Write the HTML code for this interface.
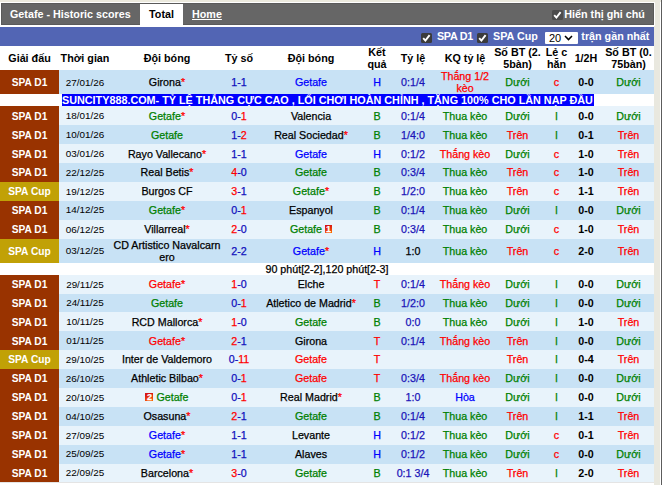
<!DOCTYPE html>
<html lang="vi"><head><meta charset="utf-8"><title>Getafe - Historic scores</title>
<style>
html,body{margin:0;padding:0}
body{width:662px;height:485px;overflow:hidden;background:#fff;position:relative;font-family:"Liberation Sans",sans-serif;font-size:10.7px;color:#000}
.abs{position:absolute}
#page{position:absolute;left:0;top:0;width:662px;height:485px;overflow:hidden;background:#fff}
.r{position:absolute;left:0;width:654px}
.c{position:absolute;height:12px;line-height:12px;text-align:center;white-space:nowrap;font-size:10.7px;-webkit-text-stroke:0.25px}
.c span,.c b{line-height:1px}
.lg,.th,.hh,.dt{-webkit-text-stroke:0}
.lg{color:#fff;font-weight:bold}
.lg span{font-size:10.2px}
.st{color:#ff0000;font-weight:normal}
.sc{color:#1010bc}
.tl{color:#1a14b8}
.hh{font-weight:bold}
.th{font-weight:bold}
.th span{font-size:10.75px}
.dt span{font-size:9.9px}
.card{display:inline-block;overflow:hidden;font-style:normal;background:linear-gradient(160deg,#d61414 20%,#ff6a00 100%);color:#fff;font-size:9px;line-height:8.5px;width:8px;height:8px;font-weight:bold;margin:0 3px 0 0;text-align:center}
.card.cr{margin:0 0 0 3px;width:7px}
.cb{width:10.5px;height:10px;background:#3b3b3b;border-radius:1.5px}
</style></head><body><div id="page">
<div class="abs" style="left:0;top:0;width:662px;height:2px;background:#ebe9dd"></div>
<div class="abs" style="left:654px;top:0;width:6px;height:485px;background:#e9e8df"></div>
<div class="abs" style="left:654px;top:2px;width:1px;height:24px;background:#fff"></div>
<div class="abs" style="left:661px;top:0;width:1px;height:485px;background:#5c5c5c"></div>
<div class="abs" style="left:1px;top:3px;width:653px;height:22px;background:#666;box-sizing:border-box;border:1px solid #5a5a5a"></div>
<div class="abs" style="left:10px;top:3px;height:22px;line-height:22px;color:#fff;font-weight:bold;font-size:10.75px;white-space:nowrap">Getafe - Historic scores</div>
<div class="abs" style="left:140px;top:4px;width:43px;height:21px;background:#fff;line-height:20px;text-align:center;font-weight:bold;font-size:10.75px">Total</div>
<div class="abs" style="left:192px;top:3px;height:22px;line-height:22px;color:#fff;font-weight:bold;font-size:10.75px;text-decoration:underline">Home</div>
<div class="abs cb" style="left:552px;top:9.5px;background:#4c4c4c"><svg width="10.5" height="10" viewBox="0 0 10.5 10" style="display:block"><path d="M2.2 5.2 L4.4 7.6 L8.6 2.2" fill="none" stroke="#fff" stroke-width="1.9"/></svg></div>
<div class="abs" style="left:564.3px;top:3px;height:22px;line-height:22px;color:#fff;font-weight:bold;font-size:10.75px;white-space:nowrap">Hiển thị ghi chú</div>
<div class="abs" style="left:0;top:27px;width:654px;height:19px;background:#5265b4"></div>
<div class="abs cb" style="left:421.3px;top:32.7px"><svg width="10.5" height="10" viewBox="0 0 10.5 10" style="display:block"><path d="M2.2 5.2 L4.4 7.6 L8.6 2.2" fill="none" stroke="#fff" stroke-width="1.9"/></svg></div>
<div class="abs" style="left:437px;top:27px;height:19px;line-height:19px;color:#fff;font-weight:bold;font-size:10.75px;letter-spacing:-0.3px;white-space:nowrap">SPA D1</div>
<div class="abs cb" style="left:477px;top:32.7px"><svg width="10.5" height="10" viewBox="0 0 10.5 10" style="display:block"><path d="M2.2 5.2 L4.4 7.6 L8.6 2.2" fill="none" stroke="#fff" stroke-width="1.9"/></svg></div>
<div class="abs" style="left:493px;top:27px;height:19px;line-height:19px;color:#fff;font-weight:bold;font-size:10.75px;white-space:nowrap">SPA Cup</div>
<div class="abs" style="left:545px;top:31.6px;width:33px;height:12.4px;background:#fff;border-radius:1px;box-sizing:border-box;font-size:11px;line-height:12.4px;padding-left:4px">20<svg class="abs" style="left:18.5px;top:3.5px" width="9" height="6" viewBox="0 0 9 6"><path d="M1 1 L4.5 4.6 L8 1" fill="none" stroke="#000" stroke-width="1.5"/></svg></div>
<div class="abs" style="left:581.3px;top:27px;height:19px;line-height:19px;color:#fff;font-weight:bold;font-size:10.75px;white-space:nowrap">trận gần nhất</div>
<div class="r" style="top:46px;height:24px;background:#fff"><div class="c th" style="left:0px;width:59px;top:6px;"><span>Giải đấu</span></div><div class="c th" style="left:59px;width:52px;top:6px;"><span>Thời gian</span></div><div class="c th" style="left:111px;width:112px;top:6px;"><span>Đội bóng</span></div><div class="c th" style="left:223px;width:32px;top:6px;"><span>Tỷ số</span></div><div class="c th" style="left:255px;width:112px;top:6px;"><span>Đội bóng</span></div><div class="c th" style="left:367px;width:20px;top:0px;"><span>Kết</span></div><div class="c th" style="left:367px;width:20px;top:12px;"><span>quả</span></div><div class="c th" style="left:387px;width:52px;top:6px;"><span>Tỷ lệ</span></div><div class="c th" style="left:439px;width:52px;top:6px;"><span>KQ tỷ lệ</span></div><div class="c th" style="left:491px;width:53px;top:0px;"><span>Số BT (2.</span></div><div class="c th" style="left:491px;width:53px;top:12px;"><span>5bàn)</span></div><div class="c th" style="left:544px;width:25px;top:0px;"><span>Lẻ c</span></div><div class="c th" style="left:544px;width:25px;top:12px;"><span>hẵn</span></div><div class="c th" style="left:569px;width:34px;top:6px;"><span>1/2H</span></div><div class="c th" style="left:603px;width:51px;top:0px;"><span>Số BT (0.</span></div><div class="c th" style="left:603px;width:51px;top:12px;"><span>75bàn)</span></div></div>
<div class="r" style="top:70px;height:24px;background:#c8e2f5"><div class="abs" style="left:0px;top:0;width:59px;height:24px;background:#993300"></div><div class="c lg" style="left:0px;width:59px;top:6px;"><span>SPA D1</span></div><div class="c dt" style="left:59px;width:52px;top:6px;"><span>27/01/26</span></div><div class="c " style="left:111px;width:112px;top:6px;"><span style="color:#000000">Girona</span><b class="st">*</b></div><div class="c sc" style="left:223px;width:32px;top:6px;">1-1</div><div class="c " style="left:255px;width:112px;top:6px;"><span style="color:#0000ff">Getafe</span></div><div class="c " style="left:367px;width:20px;top:6px;color:#0000ff">H</div><div class="c tl" style="left:387px;width:52px;top:6px;">0:1/4</div><div class="c " style="left:439px;width:52px;top:0px;color:#ff0000">Thắng 1/2</div><div class="c " style="left:439px;width:52px;top:12px;color:#ff0000">kèo</div><div class="c " style="left:491px;width:53px;top:6px;color:#008000">Dưới</div><div class="c " style="left:544px;width:25px;top:6px;color:#ff0000">c</div><div class="c hh" style="left:569px;width:34px;top:6px;">0-0</div><div class="c " style="left:603px;width:51px;top:6px;color:#008000">Dưới</div></div>
<div class="r" style="top:94px;height:12px;background:#fff"><div class="abs" style="left:62px;top:0px;height:12px;line-height:12px;background:#0000ff;color:#fff;font-weight:bold;font-size:10.8px;white-space:nowrap;padding:0 1px 0 0">SUNCITY888.COM- TỶ LỆ THẮNG CỰC CAO , LỐI CHƠI HOÀN CHỈNH , TẶNG 100% CHO LẦN NẠP ĐẦU</div></div>
<div class="r" style="top:106px;height:19px;background:#e8f3fb"><div class="abs" style="left:0px;top:0;width:59px;height:19px;background:#993300"></div><div class="c lg" style="left:0px;width:59px;top:4px;"><span>SPA D1</span></div><div class="c dt" style="left:59px;width:52px;top:3px;"><span>18/01/26</span></div><div class="c " style="left:111px;width:112px;top:4px;"><span style="color:#008000">Getafe</span><b class="st">*</b></div><div class="c sc" style="left:223px;width:32px;top:4px;">0-<span style="color:#ff0000">1</span></div><div class="c " style="left:255px;width:112px;top:4px;"><span style="color:#000000">Valencia</span></div><div class="c " style="left:367px;width:20px;top:4px;color:#008000">B</div><div class="c tl" style="left:387px;width:52px;top:4px;">0:1/4</div><div class="c " style="left:439px;width:52px;top:4px;color:#008000">Thua kèo</div><div class="c " style="left:491px;width:53px;top:4px;color:#008000">Dưới</div><div class="c " style="left:544px;width:25px;top:4px;color:#008000">l</div><div class="c hh" style="left:569px;width:34px;top:4px;">0-0</div><div class="c " style="left:603px;width:51px;top:4px;color:#008000">Dưới</div></div>
<div class="r" style="top:125px;height:19px;background:#c8e2f5"><div class="abs" style="left:0px;top:0;width:59px;height:19px;background:#993300"></div><div class="c lg" style="left:0px;width:59px;top:4px;"><span>SPA D1</span></div><div class="c dt" style="left:59px;width:52px;top:3px;"><span>10/01/26</span></div><div class="c " style="left:111px;width:112px;top:4px;"><span style="color:#008000">Getafe</span></div><div class="c sc" style="left:223px;width:32px;top:4px;">1-<span style="color:#ff0000">2</span></div><div class="c " style="left:255px;width:112px;top:4px;"><span style="color:#000000">Real Sociedad</span><b class="st">*</b></div><div class="c " style="left:367px;width:20px;top:4px;color:#008000">B</div><div class="c tl" style="left:387px;width:52px;top:4px;">1/4:0</div><div class="c " style="left:439px;width:52px;top:4px;color:#008000">Thua kèo</div><div class="c " style="left:491px;width:53px;top:4px;color:#ff0000">Trên</div><div class="c " style="left:544px;width:25px;top:4px;color:#008000">l</div><div class="c hh" style="left:569px;width:34px;top:4px;">0-1</div><div class="c " style="left:603px;width:51px;top:4px;color:#ff0000">Trên</div></div>
<div class="r" style="top:144px;height:19px;background:#e8f3fb"><div class="abs" style="left:0px;top:0;width:59px;height:19px;background:#993300"></div><div class="c lg" style="left:0px;width:59px;top:4px;"><span>SPA D1</span></div><div class="c dt" style="left:59px;width:52px;top:3px;"><span>03/01/26</span></div><div class="c " style="left:111px;width:112px;top:4px;"><span style="color:#000000">Rayo Vallecano</span><b class="st">*</b></div><div class="c sc" style="left:223px;width:32px;top:4px;">1-1</div><div class="c " style="left:255px;width:112px;top:4px;"><span style="color:#0000ff">Getafe</span></div><div class="c " style="left:367px;width:20px;top:4px;color:#0000ff">H</div><div class="c tl" style="left:387px;width:52px;top:4px;">0:1/2</div><div class="c " style="left:439px;width:52px;top:4px;color:#ff0000">Thắng kèo</div><div class="c " style="left:491px;width:53px;top:4px;color:#008000">Dưới</div><div class="c " style="left:544px;width:25px;top:4px;color:#ff0000">c</div><div class="c hh" style="left:569px;width:34px;top:4px;">1-0</div><div class="c " style="left:603px;width:51px;top:4px;color:#ff0000">Trên</div></div>
<div class="r" style="top:163px;height:19px;background:#c8e2f5"><div class="abs" style="left:0px;top:0;width:59px;height:19px;background:#993300"></div><div class="c lg" style="left:0px;width:59px;top:3px;"><span>SPA D1</span></div><div class="c dt" style="left:59px;width:52px;top:3px;"><span>22/12/25</span></div><div class="c " style="left:111px;width:112px;top:3px;"><span style="color:#000000">Real Betis</span><b class="st">*</b></div><div class="c sc" style="left:223px;width:32px;top:3px;"><span style="color:#ff0000">4</span>-0</div><div class="c " style="left:255px;width:112px;top:3px;"><span style="color:#008000">Getafe</span></div><div class="c " style="left:367px;width:20px;top:3px;color:#008000">B</div><div class="c tl" style="left:387px;width:52px;top:3px;">0:3/4</div><div class="c " style="left:439px;width:52px;top:3px;color:#008000">Thua kèo</div><div class="c " style="left:491px;width:53px;top:3px;color:#ff0000">Trên</div><div class="c " style="left:544px;width:25px;top:3px;color:#ff0000">c</div><div class="c hh" style="left:569px;width:34px;top:3px;">1-0</div><div class="c " style="left:603px;width:51px;top:3px;color:#ff0000">Trên</div></div>
<div class="r" style="top:182px;height:19px;background:#e8f3fb"><div class="abs" style="left:0px;top:0;width:59px;height:19px;background:#c1a106"></div><div class="c lg" style="left:0px;width:59px;top:3px;"><span>SPA Cup</span></div><div class="c dt" style="left:59px;width:52px;top:3px;"><span>19/12/25</span></div><div class="c " style="left:111px;width:112px;top:3px;"><span style="color:#000000">Burgos CF</span></div><div class="c sc" style="left:223px;width:32px;top:3px;"><span style="color:#ff0000">3</span>-1</div><div class="c " style="left:255px;width:112px;top:3px;"><span style="color:#008000">Getafe</span><b class="st">*</b></div><div class="c " style="left:367px;width:20px;top:3px;color:#008000">B</div><div class="c tl" style="left:387px;width:52px;top:3px;">1/2:0</div><div class="c " style="left:439px;width:52px;top:3px;color:#008000">Thua kèo</div><div class="c " style="left:491px;width:53px;top:3px;color:#ff0000">Trên</div><div class="c " style="left:544px;width:25px;top:3px;color:#ff0000">c</div><div class="c hh" style="left:569px;width:34px;top:3px;">1-1</div><div class="c " style="left:603px;width:51px;top:3px;color:#ff0000">Trên</div></div>
<div class="r" style="top:201px;height:19px;background:#c8e2f5"><div class="abs" style="left:0px;top:0;width:59px;height:19px;background:#993300"></div><div class="c lg" style="left:0px;width:59px;top:3px;"><span>SPA D1</span></div><div class="c dt" style="left:59px;width:52px;top:2px;"><span>14/12/25</span></div><div class="c " style="left:111px;width:112px;top:3px;"><span style="color:#008000">Getafe</span><b class="st">*</b></div><div class="c sc" style="left:223px;width:32px;top:3px;">0-<span style="color:#ff0000">1</span></div><div class="c " style="left:255px;width:112px;top:3px;"><span style="color:#000000">Espanyol</span></div><div class="c " style="left:367px;width:20px;top:3px;color:#008000">B</div><div class="c tl" style="left:387px;width:52px;top:3px;">0:1/4</div><div class="c " style="left:439px;width:52px;top:3px;color:#008000">Thua kèo</div><div class="c " style="left:491px;width:53px;top:3px;color:#008000">Dưới</div><div class="c " style="left:544px;width:25px;top:3px;color:#008000">l</div><div class="c hh" style="left:569px;width:34px;top:3px;">0-0</div><div class="c " style="left:603px;width:51px;top:3px;color:#008000">Dưới</div></div>
<div class="r" style="top:220px;height:19px;background:#e8f3fb"><div class="abs" style="left:0px;top:0;width:59px;height:19px;background:#993300"></div><div class="c lg" style="left:0px;width:59px;top:3px;"><span>SPA D1</span></div><div class="c dt" style="left:59px;width:52px;top:3px;"><span>06/12/25</span></div><div class="c " style="left:111px;width:112px;top:3px;"><span style="color:#000000">Villarreal</span><b class="st">*</b></div><div class="c sc" style="left:223px;width:32px;top:3px;"><span style="color:#ff0000">2</span>-0</div><div class="c " style="left:255px;width:112px;top:3px;"><span style="color:#008000">Getafe</span><i class="card cr">1</i></div><div class="c " style="left:367px;width:20px;top:3px;color:#008000">B</div><div class="c tl" style="left:387px;width:52px;top:3px;">0:3/4</div><div class="c " style="left:439px;width:52px;top:3px;color:#008000">Thua kèo</div><div class="c " style="left:491px;width:53px;top:3px;color:#008000">Dưới</div><div class="c " style="left:544px;width:25px;top:3px;color:#ff0000">c</div><div class="c hh" style="left:569px;width:34px;top:3px;">1-0</div><div class="c " style="left:603px;width:51px;top:3px;color:#ff0000">Trên</div></div>
<div class="r" style="top:239px;height:24px;background:#c8e2f5"><div class="abs" style="left:0px;top:0;width:59px;height:24px;background:#c1a106"></div><div class="c lg" style="left:0px;width:59px;top:6px;"><span>SPA Cup</span></div><div class="c dt" style="left:59px;width:52px;top:5px;"><span>03/12/25</span></div><div class="c " style="left:111px;width:112px;top:0px;"><span style="color:#000000">CD Artistico Navalcarn</span></div><div class="c " style="left:111px;width:112px;top:12px;"><span style="color:#000000">ero</span></div><div class="c sc" style="left:223px;width:32px;top:6px;">2-2</div><div class="c " style="left:255px;width:112px;top:6px;"><span style="color:#0000ff">Getafe</span><b class="st">*</b></div><div class="c " style="left:367px;width:20px;top:6px;color:#0000ff">H</div><div class="c tl" style="left:387px;width:52px;top:6px;color:#000">1:0</div><div class="c " style="left:439px;width:52px;top:6px;color:#008000">Thua kèo</div><div class="c " style="left:491px;width:53px;top:6px;color:#ff0000">Trên</div><div class="c " style="left:544px;width:25px;top:6px;color:#ff0000">c</div><div class="c hh" style="left:569px;width:34px;top:6px;">2-0</div><div class="c " style="left:603px;width:51px;top:6px;color:#ff0000">Trên</div></div>
<div class="r" style="top:263px;height:12px;background:#fff"><div class="c" style="left:0;width:654px;top:0px">90 phút[2-2],120 phút[2-3]</div></div>
<div class="r" style="top:275px;height:19px;background:#e8f3fb"><div class="abs" style="left:0px;top:0;width:59px;height:19px;background:#993300"></div><div class="c lg" style="left:0px;width:59px;top:3px;"><span>SPA D1</span></div><div class="c dt" style="left:59px;width:52px;top:3px;"><span>29/11/25</span></div><div class="c " style="left:111px;width:112px;top:3px;"><span style="color:#ff0000">Getafe</span><b class="st">*</b></div><div class="c sc" style="left:223px;width:32px;top:3px;"><span style="color:#ff0000">1</span>-0</div><div class="c " style="left:255px;width:112px;top:3px;"><span style="color:#000000">Elche</span></div><div class="c " style="left:367px;width:20px;top:3px;color:#ff0000">T</div><div class="c tl" style="left:387px;width:52px;top:3px;">0:1/4</div><div class="c " style="left:439px;width:52px;top:3px;color:#ff0000">Thắng kèo</div><div class="c " style="left:491px;width:53px;top:3px;color:#008000">Dưới</div><div class="c " style="left:544px;width:25px;top:3px;color:#008000">l</div><div class="c hh" style="left:569px;width:34px;top:3px;">0-0</div><div class="c " style="left:603px;width:51px;top:3px;color:#008000">Dưới</div></div>
<div class="r" style="top:294px;height:18px;background:#c8e2f5"><div class="abs" style="left:0px;top:0;width:59px;height:18px;background:#993300"></div><div class="c lg" style="left:0px;width:59px;top:3px;"><span>SPA D1</span></div><div class="c dt" style="left:59px;width:52px;top:2px;"><span>24/11/25</span></div><div class="c " style="left:111px;width:112px;top:3px;"><span style="color:#008000">Getafe</span></div><div class="c sc" style="left:223px;width:32px;top:3px;">0-<span style="color:#ff0000">1</span></div><div class="c " style="left:255px;width:112px;top:3px;"><span style="color:#000000">Atletico de Madrid</span><b class="st">*</b></div><div class="c " style="left:367px;width:20px;top:3px;color:#008000">B</div><div class="c tl" style="left:387px;width:52px;top:3px;">1/2:0</div><div class="c " style="left:439px;width:52px;top:3px;color:#008000">Thua kèo</div><div class="c " style="left:491px;width:53px;top:3px;color:#008000">Dưới</div><div class="c " style="left:544px;width:25px;top:3px;color:#008000">l</div><div class="c hh" style="left:569px;width:34px;top:3px;">0-0</div><div class="c " style="left:603px;width:51px;top:3px;color:#008000">Dưới</div></div>
<div class="r" style="top:312px;height:19px;background:#e8f3fb"><div class="abs" style="left:0px;top:0;width:59px;height:19px;background:#993300"></div><div class="c lg" style="left:0px;width:59px;top:4px;"><span>SPA D1</span></div><div class="c dt" style="left:59px;width:52px;top:3px;"><span>10/11/25</span></div><div class="c " style="left:111px;width:112px;top:4px;"><span style="color:#000000">RCD Mallorca</span><b class="st">*</b></div><div class="c sc" style="left:223px;width:32px;top:4px;"><span style="color:#ff0000">1</span>-0</div><div class="c " style="left:255px;width:112px;top:4px;"><span style="color:#008000">Getafe</span></div><div class="c " style="left:367px;width:20px;top:4px;color:#008000">B</div><div class="c tl" style="left:387px;width:52px;top:4px;">0:0</div><div class="c " style="left:439px;width:52px;top:4px;color:#008000">Thua kèo</div><div class="c " style="left:491px;width:53px;top:4px;color:#008000">Dưới</div><div class="c " style="left:544px;width:25px;top:4px;color:#008000">l</div><div class="c hh" style="left:569px;width:34px;top:4px;">1-0</div><div class="c " style="left:603px;width:51px;top:4px;color:#ff0000">Trên</div></div>
<div class="r" style="top:331px;height:19px;background:#c8e2f5"><div class="abs" style="left:0px;top:0;width:59px;height:19px;background:#993300"></div><div class="c lg" style="left:0px;width:59px;top:4px;"><span>SPA D1</span></div><div class="c dt" style="left:59px;width:52px;top:3px;"><span>01/11/25</span></div><div class="c " style="left:111px;width:112px;top:4px;"><span style="color:#ff0000">Getafe</span><b class="st">*</b></div><div class="c sc" style="left:223px;width:32px;top:4px;"><span style="color:#ff0000">2</span>-1</div><div class="c " style="left:255px;width:112px;top:4px;"><span style="color:#000000">Girona</span></div><div class="c " style="left:367px;width:20px;top:4px;color:#ff0000">T</div><div class="c tl" style="left:387px;width:52px;top:4px;">0:1/4</div><div class="c " style="left:439px;width:52px;top:4px;color:#ff0000">Thắng kèo</div><div class="c " style="left:491px;width:53px;top:4px;color:#ff0000">Trên</div><div class="c " style="left:544px;width:25px;top:4px;color:#008000">l</div><div class="c hh" style="left:569px;width:34px;top:4px;">0-0</div><div class="c " style="left:603px;width:51px;top:4px;color:#008000">Dưới</div></div>
<div class="r" style="top:350px;height:19px;background:#e8f3fb"><div class="abs" style="left:0px;top:0;width:59px;height:19px;background:#c1a106"></div><div class="c lg" style="left:0px;width:59px;top:3px;"><span>SPA Cup</span></div><div class="c dt" style="left:59px;width:52px;top:3px;"><span>29/10/25</span></div><div class="c " style="left:111px;width:112px;top:3px;"><span style="color:#000000">Inter de Valdemoro</span></div><div class="c sc" style="left:223px;width:32px;top:3px;">0-<span style="color:#ff0000">11</span></div><div class="c " style="left:255px;width:112px;top:3px;"><span style="color:#ff0000">Getafe</span></div><div class="c " style="left:367px;width:20px;top:3px;color:#ff0000">T</div><div class="c tl" style="left:387px;width:52px;top:3px;"></div><div class="c " style="left:439px;width:52px;top:3px;color:#000000"></div><div class="c " style="left:491px;width:53px;top:3px;color:#ff0000">Trên</div><div class="c " style="left:544px;width:25px;top:3px;color:#008000">l</div><div class="c hh" style="left:569px;width:34px;top:3px;">0-4</div><div class="c " style="left:603px;width:51px;top:3px;color:#ff0000">Trên</div></div>
<div class="r" style="top:369px;height:19px;background:#c8e2f5"><div class="abs" style="left:0px;top:0;width:59px;height:19px;background:#993300"></div><div class="c lg" style="left:0px;width:59px;top:3px;"><span>SPA D1</span></div><div class="c dt" style="left:59px;width:52px;top:3px;"><span>26/10/25</span></div><div class="c " style="left:111px;width:112px;top:3px;"><span style="color:#000000">Athletic Bilbao</span><b class="st">*</b></div><div class="c sc" style="left:223px;width:32px;top:3px;">0-<span style="color:#ff0000">1</span></div><div class="c " style="left:255px;width:112px;top:3px;"><span style="color:#ff0000">Getafe</span></div><div class="c " style="left:367px;width:20px;top:3px;color:#ff0000">T</div><div class="c tl" style="left:387px;width:52px;top:3px;">0:3/4</div><div class="c " style="left:439px;width:52px;top:3px;color:#ff0000">Thắng kèo</div><div class="c " style="left:491px;width:53px;top:3px;color:#008000">Dưới</div><div class="c " style="left:544px;width:25px;top:3px;color:#008000">l</div><div class="c hh" style="left:569px;width:34px;top:3px;">0-0</div><div class="c " style="left:603px;width:51px;top:3px;color:#008000">Dưới</div></div>
<div class="r" style="top:388px;height:19px;background:#e8f3fb"><div class="abs" style="left:0px;top:0;width:59px;height:19px;background:#993300"></div><div class="c lg" style="left:0px;width:59px;top:3px;"><span>SPA D1</span></div><div class="c dt" style="left:59px;width:52px;top:3px;"><span>20/10/25</span></div><div class="c " style="left:111px;width:112px;top:3px;"><i class="card">2</i><span style="color:#008000">Getafe</span></div><div class="c sc" style="left:223px;width:32px;top:3px;">0-<span style="color:#ff0000">1</span></div><div class="c " style="left:255px;width:112px;top:3px;"><span style="color:#000000">Real Madrid</span><b class="st">*</b></div><div class="c " style="left:367px;width:20px;top:3px;color:#008000">B</div><div class="c tl" style="left:387px;width:52px;top:3px;">1:0</div><div class="c " style="left:439px;width:52px;top:3px;color:#0000ff">Hòa</div><div class="c " style="left:491px;width:53px;top:3px;color:#008000">Dưới</div><div class="c " style="left:544px;width:25px;top:3px;color:#008000">l</div><div class="c hh" style="left:569px;width:34px;top:3px;">0-0</div><div class="c " style="left:603px;width:51px;top:3px;color:#008000">Dưới</div></div>
<div class="r" style="top:407px;height:19px;background:#c8e2f5"><div class="abs" style="left:0px;top:0;width:59px;height:19px;background:#993300"></div><div class="c lg" style="left:0px;width:59px;top:3px;"><span>SPA D1</span></div><div class="c dt" style="left:59px;width:52px;top:3px;"><span>04/10/25</span></div><div class="c " style="left:111px;width:112px;top:3px;"><span style="color:#000000">Osasuna</span><b class="st">*</b></div><div class="c sc" style="left:223px;width:32px;top:3px;"><span style="color:#ff0000">2</span>-1</div><div class="c " style="left:255px;width:112px;top:3px;"><span style="color:#008000">Getafe</span></div><div class="c " style="left:367px;width:20px;top:3px;color:#008000">B</div><div class="c tl" style="left:387px;width:52px;top:3px;">0:1/4</div><div class="c " style="left:439px;width:52px;top:3px;color:#008000">Thua kèo</div><div class="c " style="left:491px;width:53px;top:3px;color:#ff0000">Trên</div><div class="c " style="left:544px;width:25px;top:3px;color:#008000">l</div><div class="c hh" style="left:569px;width:34px;top:3px;">1-1</div><div class="c " style="left:603px;width:51px;top:3px;color:#ff0000">Trên</div></div>
<div class="r" style="top:426px;height:19px;background:#e8f3fb"><div class="abs" style="left:0px;top:0;width:59px;height:19px;background:#993300"></div><div class="c lg" style="left:0px;width:59px;top:3px;"><span>SPA D1</span></div><div class="c dt" style="left:59px;width:52px;top:3px;"><span>27/09/25</span></div><div class="c " style="left:111px;width:112px;top:3px;"><span style="color:#0000ff">Getafe</span><b class="st">*</b></div><div class="c sc" style="left:223px;width:32px;top:3px;">1-1</div><div class="c " style="left:255px;width:112px;top:3px;"><span style="color:#000000">Levante</span></div><div class="c " style="left:367px;width:20px;top:3px;color:#0000ff">H</div><div class="c tl" style="left:387px;width:52px;top:3px;">0:1/2</div><div class="c " style="left:439px;width:52px;top:3px;color:#008000">Thua kèo</div><div class="c " style="left:491px;width:53px;top:3px;color:#008000">Dưới</div><div class="c " style="left:544px;width:25px;top:3px;color:#ff0000">c</div><div class="c hh" style="left:569px;width:34px;top:3px;">0-1</div><div class="c " style="left:603px;width:51px;top:3px;color:#ff0000">Trên</div></div>
<div class="r" style="top:445px;height:19px;background:#c8e2f5"><div class="abs" style="left:0px;top:0;width:59px;height:19px;background:#993300"></div><div class="c lg" style="left:0px;width:59px;top:3px;"><span>SPA D1</span></div><div class="c dt" style="left:59px;width:52px;top:2px;"><span>25/09/25</span></div><div class="c " style="left:111px;width:112px;top:3px;"><span style="color:#0000ff">Getafe</span><b class="st">*</b></div><div class="c sc" style="left:223px;width:32px;top:3px;">1-1</div><div class="c " style="left:255px;width:112px;top:3px;"><span style="color:#000000">Alaves</span></div><div class="c " style="left:367px;width:20px;top:3px;color:#0000ff">H</div><div class="c tl" style="left:387px;width:52px;top:3px;">0:1/2</div><div class="c " style="left:439px;width:52px;top:3px;color:#008000">Thua kèo</div><div class="c " style="left:491px;width:53px;top:3px;color:#008000">Dưới</div><div class="c " style="left:544px;width:25px;top:3px;color:#ff0000">c</div><div class="c hh" style="left:569px;width:34px;top:3px;">0-0</div><div class="c " style="left:603px;width:51px;top:3px;color:#008000">Dưới</div></div>
<div class="r" style="top:464px;height:18px;background:#e8f3fb"><div class="abs" style="left:0px;top:0;width:59px;height:18px;background:#993300"></div><div class="c lg" style="left:0px;width:59px;top:3px;"><span>SPA D1</span></div><div class="c dt" style="left:59px;width:52px;top:2px;"><span>22/09/25</span></div><div class="c " style="left:111px;width:112px;top:3px;"><span style="color:#000000">Barcelona</span><b class="st">*</b></div><div class="c sc" style="left:223px;width:32px;top:3px;"><span style="color:#ff0000">3</span>-0</div><div class="c " style="left:255px;width:112px;top:3px;"><span style="color:#008000">Getafe</span></div><div class="c " style="left:367px;width:20px;top:3px;color:#008000">B</div><div class="c tl" style="left:387px;width:52px;top:3px;">0:1 3/4</div><div class="c " style="left:439px;width:52px;top:3px;color:#008000">Thua kèo</div><div class="c " style="left:491px;width:53px;top:3px;color:#ff0000">Trên</div><div class="c " style="left:544px;width:25px;top:3px;color:#008000">l</div><div class="c hh" style="left:569px;width:34px;top:3px;">2-0</div><div class="c " style="left:603px;width:51px;top:3px;color:#ff0000">Trên</div></div>
<div class="abs" style="left:0;top:482px;width:654px;height:1px;background:#e4e4e4"></div>
</div></body></html>
